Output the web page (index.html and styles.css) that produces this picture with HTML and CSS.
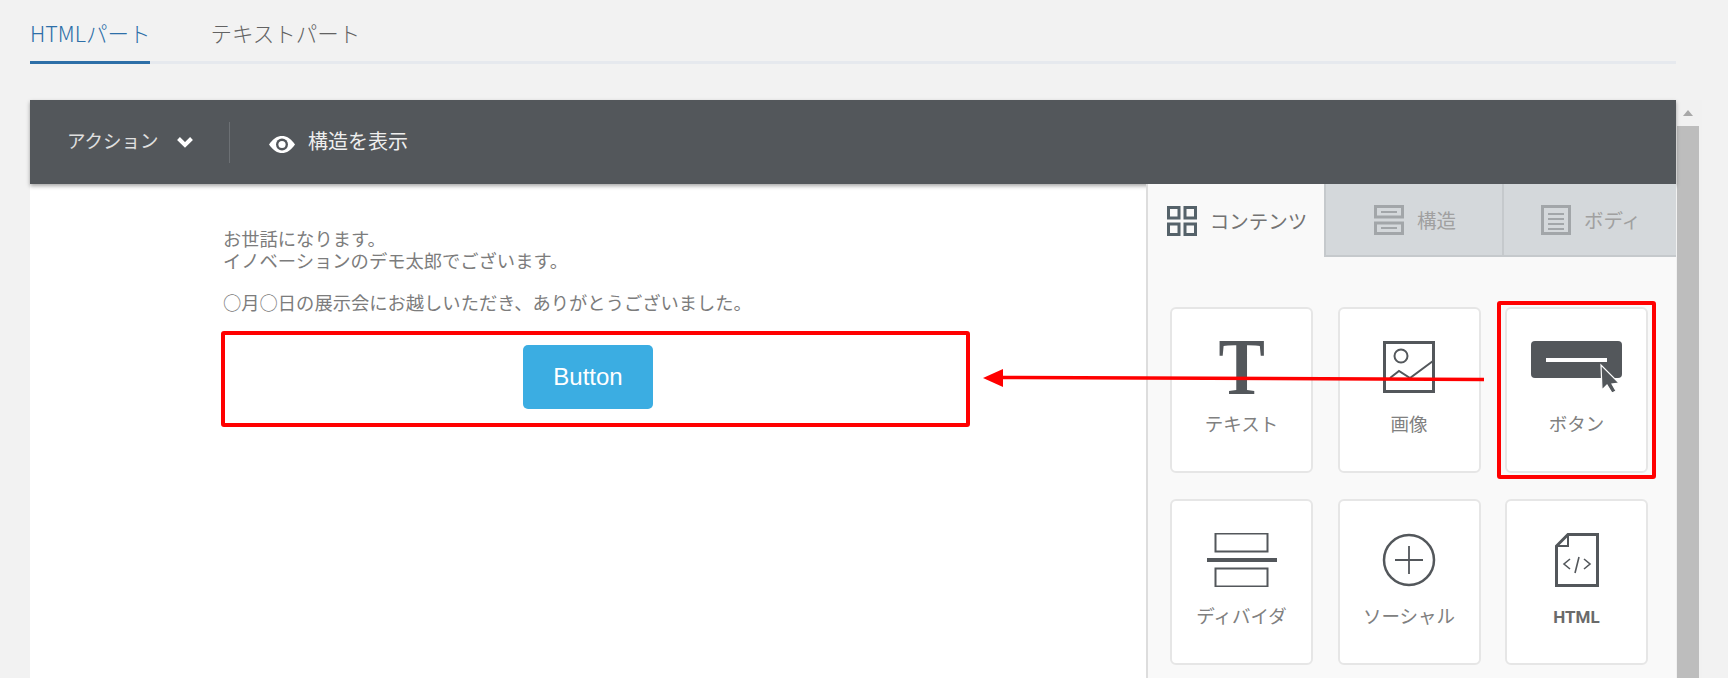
FILE: index.html
```html
<!DOCTYPE html>
<html lang="ja">
<head>
  <meta charset="UTF-8" />
  <meta name="viewport" content="width=device-width, initial-scale=1.0" />
  <title>HTMLパート</title>
  <link rel="stylesheet" href="styles.css">
</head>
<body>
  <div class="page">
    <div class="part-tabs">
      <a class="part-tab active">HTMLパート</a>
      <a class="part-tab">テキストパート</a>
    </div>

    <div class="editor-wrap">
      <div class="editor">
        <div class="toolbar">
          <div class="action-menu">
            <span>アクション</span>
            <svg class="chevron" width="18" height="12" viewBox="0 0 18 12"><polyline points="2.500,2.500 9,9 15.500,2.500" fill="none" stroke="#fff" stroke-width="4"/></svg>
          </div>
          <div class="toolbar-divider"></div>
          <div class="show-structure">
            <svg width="26" height="17" viewBox="0 0 26 17"><path d="M0 8.500C4 2.500 8.500 0 13 0s9 2.500 13 8.500C22 14.500 17.500 17 13 17S4 14.500 0 8.500Z" fill="#fff"/><circle cx="13" cy="8.500" r="6" fill="#53575b"/><circle cx="13" cy="8.500" r="3.600" fill="#fff"/></svg>
            <span>構造を表示</span>
          </div>
        </div>

        <div class="editor-body">
          <div class="canvas">
            <p class="mail-text">お世話になります。<br>イノベーションのデモ太郎でございます。</p>
            <p class="mail-text">○月○日の展示会にお越しいただき、ありがとうございました。</p>
            <div class="button-block">
              <a class="mail-button">Button</a>
            </div>
          </div>

          <div class="palette">
            <div class="palette-tabs">
              <div class="palette-tab active">
                <svg width="30" height="30" viewBox="0 0 30 30" fill="none" stroke="#55626a" stroke-width="3"><rect x="1.500" y="1.500" width="10.500" height="10.500"/><rect x="18" y="1.500" width="10.500" height="10.500"/><rect x="1.500" y="18" width="10.500" height="10.500"/><rect x="18" y="18" width="10.500" height="10.500"/></svg>
                <span>コンテンツ</span>
              </div>
              <div class="palette-tab">
                <svg width="30" height="30" viewBox="0 0 30 30" fill="none" stroke="#a2a6a9" stroke-width="3"><rect x="1.500" y="1.500" width="27" height="10.500"/><rect x="1.500" y="18" width="27" height="10.500"/><path d="M7 7h16M7 23h16" stroke-width="2"/></svg>
                <span>構造</span>
              </div>
              <div class="palette-tab">
                <svg width="30" height="30" viewBox="0 0 30 30" fill="none" stroke="#a2a6a9" stroke-width="3"><rect x="1.500" y="1.500" width="27" height="27"/><path d="M7 9h16M7 14h16M7 19h16M7 24h16" stroke-width="1.800"/></svg>
                <span>ボディ</span>
              </div>
            </div>

            <div class="block-grid">
              <div class="block-card">
                <div class="block-icon"><span class="text-glyph">T</span></div>
                <div class="block-label">テキスト</div>
              </div>
              <div class="block-card">
                <div class="block-icon">
                  <svg width="52" height="52" viewBox="0 0 52 52" fill="none" stroke="#53575b"><rect x="1.500" y="1.500" width="49" height="49" stroke-width="3"/><circle cx="18" cy="15" r="6.500" stroke-width="2"/><polyline points="7,37 16,30 27,37 50,20" stroke-width="2"/></svg>
                </div>
                <div class="block-label">画像</div>
              </div>
              <div class="block-card marked">
                <div class="block-icon">
                  <svg width="92" height="54" viewBox="0 0 92 54"><rect x="0" y="0" width="91" height="37" rx="4" fill="#53575b"/><rect x="15" y="17" width="61" height="4" fill="#fff"/><path d="M70 24L71 49L76 44L81 52L85 50L81 43L88 42Z" fill="#53575b" stroke="#fff" stroke-width="1.200"/></svg>
                </div>
                <div class="block-label">ボタン</div>
              </div>
              <div class="block-card">
                <div class="block-icon">
                  <svg width="70" height="54" viewBox="0 0 70 54" fill="none" stroke="#53575b"><rect x="8.500" y="0.500" width="52" height="18" stroke-width="2"/><rect x="8.500" y="35.500" width="52" height="18" stroke-width="2"/><path d="M0 27h70" stroke-width="4"/></svg>
                </div>
                <div class="block-label">ディバイダ</div>
              </div>
              <div class="block-card">
                <div class="block-icon">
                  <svg width="54" height="54" viewBox="0 0 54 54" fill="none" stroke="#53575b"><circle cx="27" cy="27" r="25" stroke-width="2.500"/><path d="M13 27h28M27 13v28" stroke-width="1.800"/></svg>
                </div>
                <div class="block-label">ソーシャル</div>
              </div>
              <div class="block-card">
                <div class="block-icon">
                  <svg width="44" height="54" viewBox="0 0 44 54" fill="none" stroke="#53575b"><path d="M13 1.500H42.500V52.500H1.500V13Z" stroke-width="3"/><path d="M13 2V13H2" stroke-width="2"/><path d="M15 26l-6 5 6 5M29 26l6 5-6 5M24 24l-4 16" stroke-width="1.600"/></svg>
                </div>
                <div class="block-label html-label">HTML</div>
              </div>
            </div>
          </div>
        </div>
      </div>

      <div class="scrollbar">
        <div class="scroll-up"></div>
        <div class="scroll-thumb"></div>
      </div>
    </div>
  </div>

  <!-- annotation arrow drawn over the screen -->
  <svg class="arrow" width="502" height="20" viewBox="0 0 502 20"><path d="M20 8.500L501 10.500" stroke="#f00" stroke-width="3.500" fill="none"/><path d="M0 9L20 0V18Z" fill="#f00"/></svg>
</body>
</html>
```

FILE: styles.css
```css
:root {
  --background: #f2f2f2;
  --dark: #53575b;
  --red: #ff0000;
  --text: #666666;
  --muted: #a0a0a0;
  --jp: "Noto Sans CJK JP", "Noto Sans", sans-serif;
}

html, body {
  margin: 0;
  height: 678px;
  overflow: hidden;
}

body {
  background-color: var(--background);
  font-family: var(--jp);
  color: var(--text);
  position: relative;
}

.page {
  padding-left: 30px;
}

/* top tabs */
.part-tabs {
  width: 1646px;
  height: 61px;
  border-bottom: 3px solid #e6e9ee;
  display: flex;
  gap: 60px;
}

.part-tab {
  height: 64px;
  box-sizing: border-box;
  padding-top: 19px;
  font-size: 21.500px;
  line-height: 28px;
  font-weight: 300;
  color: #626262;
}

.part-tab.active {
  color: #2d6fa8;
  border-bottom: 3px solid #2d6fa8;
}

/* editor */
.editor-wrap {
  margin-top: 36px;
  display: flex;
  height: 578px;
}

.editor {
  width: 1646px;
  display: flex;
  flex-direction: column;
}

.toolbar {
  height: 84px;
  flex-shrink: 0;
  background-color: var(--dark);
  box-shadow: 0 2px 4px rgba(0, 0, 0, 0.35);
  display: flex;
  align-items: center;
  color: #ffffff;
  position: relative;
}

.action-menu {
  display: flex;
  align-items: center;
  gap: 17px;
  padding-left: 37px;
  width: 162px;
  font-size: 18.500px;
  color: #e0e0e0;
}

.action-menu span,
.show-structure span {
  margin-top: -4px;
}

.toolbar-divider {
  width: 1px;
  height: 41px;
  background-color: #6c7074;
}

.show-structure {
  display: flex;
  align-items: center;
  gap: 13px;
  padding-left: 39px;
  font-size: 20px;
  color: #eeeeee;
}

.show-structure svg {
  margin-top: 4px;
}

.editor-body {
  flex: 1;
  display: flex;
  min-height: 0;
}

.canvas {
  flex: 1;
  background-color: #ffffff;
  padding: 43px 0 0 191px;
}

.mail-text {
  margin: 0 0 20px;
  padding-left: 2px;
  font-size: 18.300px;
  line-height: 22px;
  color: #7c7c7c;
}

.button-block {
  margin-top: -2px;
  width: 749px;
  height: 96px;
  box-sizing: border-box;
  border: 4px solid var(--red);
  border-radius: 3px;
  padding: 10px 0 0 298px;
  background-color: #ffffff;
}

.mail-button {
  display: flex;
  align-items: center;
  justify-content: center;
  width: 130px;
  height: 64px;
  background-color: #3bade2;
  border-radius: 5px;
  color: #ffffff;
  font-family: "Liberation Sans", Arial, sans-serif;
  font-size: 24px;
}

/* right palette */
.palette {
  width: 530px;
  box-sizing: border-box;
  background-color: #f9f9f9;
  border-left: 2px solid #dddddd;
  position: relative;
  z-index: 1;
}

.palette-tabs {
  display: flex;
  height: 73px;
}

.palette-tab {
  width: 176px;
  box-sizing: border-box;
  display: flex;
  align-items: center;
  justify-content: center;
  gap: 13px;
  padding-left: 2px;
  font-size: 19.500px;
  color: #737373;
}

.palette-tab:not(.active) {
  background-color: #d4d8db;
  border-left: 2px solid #c5c9cc;
  border-bottom: 2px solid #c5c9cc;
  color: var(--muted);
  width: 178px;
}

.palette-tab:last-child {
  width: 174px;
}

.block-grid {
  display: grid;
  grid-template-columns: repeat(3, 143px);
  grid-auto-rows: 166px;
  gap: 26px 24.500px;
  padding: 50px 0 0 22px;
}

.block-card {
  position: relative;
  box-sizing: border-box;
  background-color: #ffffff;
  border: 2px solid #e6e6e6;
  border-radius: 6px;
  padding-top: 32px;
  display: flex;
  flex-direction: column;
  align-items: center;
}

.block-card.marked::after {
  content: "";
  position: absolute;
  top: -8px;
  right: -10px;
  bottom: -8px;
  left: -10px;
  border: 4px solid var(--red);
  border-radius: 3px;
}

.block-icon {
  height: 54px;
  display: flex;
  align-items: flex-start;
  justify-content: center;
}

.text-glyph {
  font-family: "Liberation Serif", serif;
  font-weight: 700;
  font-size: 80px;
  line-height: 52px;
  color: var(--dark);
  transform: scaleX(0.87);
}

.block-label {
  margin-top: 15px;
  font-size: 18.500px;
  line-height: 26px;
  color: #808080;
}

.html-label {
  font-family: "Roboto", sans-serif;
  font-size: 17px;
  font-weight: 700;
  line-height: 30px;
  color: #6a6a6a;
}

/* scrollbar */
.scrollbar {
  width: 26px;
  background-color: #f1f1f1;
  display: flex;
  flex-direction: column;
  align-items: center;
}

.scroll-up {
  margin: 10px 2px 0 0;
  width: 0;
  height: 0;
  border-left: 5px solid transparent;
  border-right: 5px solid transparent;
  border-bottom: 6px solid #a8a8a8;
}

.scroll-thumb {
  margin: 10px 2px 0 0;
  width: 22px;
  flex: 1;
  background-color: #bdbdbd;
}

/* annotation */
.arrow {
  position: absolute;
  left: 983px;
  top: 369px;
  z-index: 2;
}
```
